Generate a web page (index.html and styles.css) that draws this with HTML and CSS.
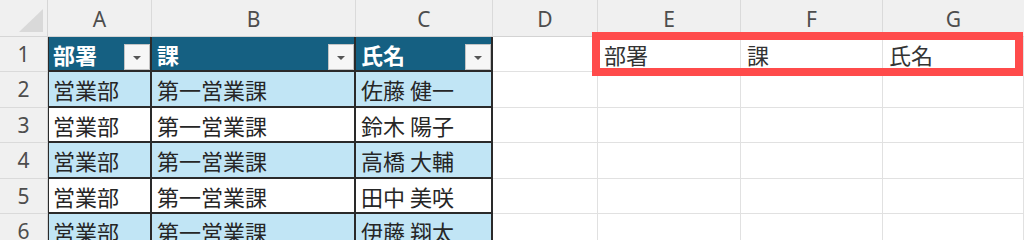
FILE: index.html
```html
<!DOCTYPE html>
<html lang="ja">
<head>
<meta charset="utf-8">
<link rel="stylesheet" href="styles.css">
</head>
<body>
<div class="sheet">
  <div class="corner"><div class="tri"></div></div>
  <div class="colhead">A</div>
  <div class="colhead">B</div>
  <div class="colhead">C</div>
  <div class="colhead">D</div>
  <div class="colhead">E</div>
  <div class="colhead">F</div>
  <div class="colhead last">G</div>

  <div class="rowhead">1</div>
  <div class="cell th first"><span>部署</span><span class="fbtn"><span class="caret"></span></span></div>
  <div class="cell th"><span>課</span><span class="fbtn"><span class="caret"></span></span></div>
  <div class="cell th"><span>氏名</span><span class="fbtn"><span class="caret"></span></span></div>
  <div class="cell"></div>
  <div class="cell plain">部署</div>
  <div class="cell plain">課</div>
  <div class="cell plain">氏名</div>

  <div class="rowhead">2</div>
  <div class="cell td first band">営業部</div>
  <div class="cell td band">第一営業課</div>
  <div class="cell td band">佐藤 健一</div>
  <div class="cell"></div><div class="cell"></div><div class="cell"></div><div class="cell"></div>

  <div class="rowhead">3</div>
  <div class="cell td first">営業部</div>
  <div class="cell td">第一営業課</div>
  <div class="cell td">鈴木 陽子</div>
  <div class="cell"></div><div class="cell"></div><div class="cell"></div><div class="cell"></div>

  <div class="rowhead">4</div>
  <div class="cell td first band">営業部</div>
  <div class="cell td band">第一営業課</div>
  <div class="cell td band">高橋 大輔</div>
  <div class="cell"></div><div class="cell"></div><div class="cell"></div><div class="cell"></div>

  <div class="rowhead">5</div>
  <div class="cell td first">営業部</div>
  <div class="cell td">第一営業課</div>
  <div class="cell td">田中 美咲</div>
  <div class="cell"></div><div class="cell"></div><div class="cell"></div><div class="cell"></div>

  <div class="rowhead">6</div>
  <div class="cell td first band">営業部</div>
  <div class="cell td band">第一営業課</div>
  <div class="cell td band">伊藤 翔太</div>
  <div class="cell"></div><div class="cell"></div><div class="cell"></div><div class="cell"></div>

  <div class="highlight"></div>
</div>
</body>
</html>
```

FILE: styles.css
```css
* { box-sizing: border-box; }
html, body {
  margin: 0;
  padding: 0;
  background: #ffffff;
  overflow: hidden;
}
.sheet {
  position: relative;
  display: grid;
  grid-template-columns: 48px 104px 204px 137px 105px 143px 142px 1fr;
  grid-template-rows: 37px 35px 36px 35px 36px 35px 36px;
  width: 1024px;
  height: 240px;
  font-family: "Noto Sans CJK JP", "Noto Sans", sans-serif;
  font-size: 22px;
  color: #262626;
}
.corner {
  background: #f0f0f0;
  border-right: 1px solid #d6d6d6;
  border-bottom: 1px solid #d6d6d6;
  display: flex;
  justify-content: flex-end;
  align-items: flex-end;
  padding: 0 4px 4px 0;
}
.tri {
  width: 24px;
  height: 23px;
  background: #d9d9d9;
  clip-path: polygon(100% 0, 100% 100%, 0 100%);
}
.colhead {
  background: #f0f0f0;
  border-right: 1px solid #dadada;
  border-bottom: 1px solid #d3d3d3;
  display: flex;
  justify-content: center;
  align-items: center;
  padding-top: 3px;
  font-family: "Noto Sans", sans-serif;
  font-size: 21px;
  color: #4d4d4d;
  line-height: 1;
}
.colhead.last { border-right: none; }
.rowhead {
  background: #f0f0f0;
  border-right: 1px solid #d3d3d3;
  border-bottom: 1px solid #dadada;
  display: flex;
  justify-content: center;
  align-items: center;
  font-family: "Noto Sans", sans-serif;
  font-size: 21px;
  color: #4d4d4d;
  line-height: 1;
}
.cell {
  border-right: 1px solid #e1e1e1;
  border-bottom: 1px solid #e1e1e1;
  display: flex;
  align-items: center;
  padding-left: 5px;
  white-space: nowrap;
  line-height: 1;
}
.cell.plain { color: #333333; padding-left: 6px; }
.cell.th {
  background: #156082;
  color: #ffffff;
  font-weight: 700;
  justify-content: space-between;
  border-right: 2px solid #2a2a2a;
  border-bottom: 2px solid #2a2a2a;
  padding-right: 0;
}
.cell.th > span:first-child { align-self: center; }
.cell.td {
  background: #ffffff;
  border-right: 2px solid #2a2a2a;
  border-bottom: 2px solid #2a2a2a;
}
.cell.td.band { background: #c1e5f5; }
.cell.first { border-left: 1px solid #2a2a2a; padding-left: 4px; }
.fbtn {
  align-self: flex-end;
  width: 26px;
  height: 26px;
  background: #f6f6f6;
  border: 1px solid #c4c4c4;
  display: flex;
  justify-content: center;
  align-items: center;
  margin-right: 0;
}
.caret {
  width: 0;
  height: 0;
  border-left: 4px solid transparent;
  border-right: 4px solid transparent;
  border-top: 4px solid #555555;
  margin-top: 1px;
}
.highlight {
  position: absolute;
  left: 592px;
  top: 32px;
  width: 431px;
  height: 44px;
  border: 8px solid #ff4b4b;
  pointer-events: none;
}
```
